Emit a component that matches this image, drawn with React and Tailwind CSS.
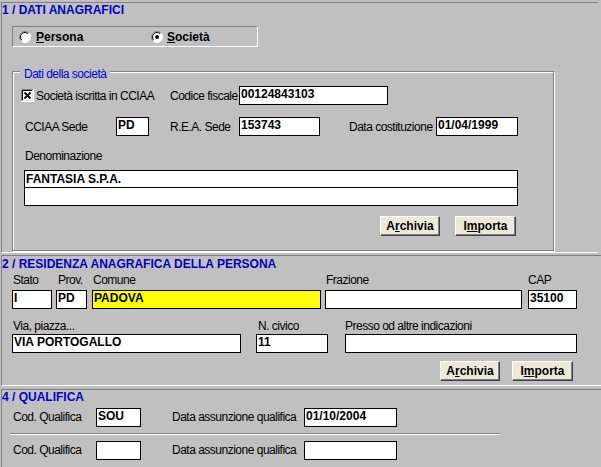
const LABEL = "text-[12px] tracking-[-0.5px] leading-[13px] text-black whitespace-nowrap";
const TITLE = "h-[14px] text-[12px] font-bold leading-[14px] text-[#0000cc] whitespace-nowrap";

function Field({ value = "", className = "", yellow = false }) {
  return (
    <div
      className={`h-[19px] shrink-0 overflow-hidden whitespace-nowrap border border-black pl-[1px] text-[12px] font-bold leading-[15px] text-black ${
        yellow ? "bg-[#ffff00]" : "bg-white"
      } ${className}`}
    >
      {value}
    </div>
  );
}

function WinButton({ a, u, b, className = "" }) {
  return (
    <button
      className={`flex h-[20px] items-center justify-center border border-t-white border-l-white border-r-[#404040] border-b-[#404040] bg-[#ece9d8] text-[12px] font-bold leading-none text-black shadow-[inset_-1px_-1px_0_#808080] ${className}`}
    >
      {a}
      <u className="underline-offset-1">{u}</u>
      {b}
    </button>
  );
}

function Radio({ checked }) {
  return (
    <svg width="12" height="12" viewBox="0 0 12 12" className="shrink-0">
      <circle cx="6" cy="6" r="5.5" fill="#fff" />
      <path d="M2.1 9.9 A5.5 5.5 0 0 1 9.9 2.1" fill="none" stroke="#808080" strokeWidth="1" />
      <path d="M2.8 9.2 A4.5 4.5 0 0 1 9.2 2.8" fill="none" stroke="#000" strokeWidth="1" />
      <path d="M9.9 2.1 A5.5 5.5 0 0 1 2.1 9.9" fill="none" stroke="#fff" strokeWidth="1" />
      {checked && <circle cx="6" cy="6" r="2" fill="#000" />}
    </svg>
  );
}

function CheckBox() {
  return (
    <svg width="13" height="13" viewBox="0 0 13 13" className="shrink-0">
      <rect x="0" y="0" width="13" height="13" fill="#fff" />
      <path d="M0.5 12 V0.5 H12" fill="none" stroke="#808080" />
      <path d="M1.5 11 V1.5 H11" fill="none" stroke="#000" />
      <path d="M0 12.5 H12.5 V0" fill="none" stroke="#fff" />
      <path d="M1 11.5 H11.5 V1" fill="none" stroke="#dfdfdf" />
      <path d="M3.5 3.5 L9.5 9.5 M9.5 3.5 L3.5 9.5" stroke="#000" strokeWidth="1.8" />
    </svg>
  );
}

export default function App() {
  return (
    <div className="h-[467px] w-[601px] overflow-hidden bg-[#c0c0c0] pl-[1px] pt-[2px] font-['Liberation_Sans',Arial,sans-serif]">
      {/* 1 / DATI ANAGRAFICI */}
      <section className="h-[251px] w-[597px] border-l border-t border-b border-l-[#808080] border-t-[#808080] border-b-white">
        <div className={TITLE}>1 / DATI ANAGRAFICI</div>

        <div className="ml-[10px] mt-[9px] flex h-[21px] w-[246px] items-center border border-t-[#808080] border-l-[#808080] border-b-white border-r-white pl-[6px]">
          <div className="flex w-[132px] items-center">
            <Radio />
            <span className="ml-[5px] text-[12px] font-bold leading-none">
              <u>P</u>ersona
            </span>
          </div>
          <Radio checked />
          <span className="ml-[4px] text-[12px] font-bold leading-none">
            <u>S</u>ocietà
          </span>
        </div>

        <div className="relative ml-[10px] mt-[24px] h-[180px] w-[542px] border border-[#808080] shadow-[inset_1px_1px_0_#fff,1px_1px_0_#fff]">
          <span className="absolute -top-[4px] left-[7px] bg-[#c0c0c0] px-[4px] text-[12px] leading-[13px] tracking-[-0.5px] text-[#0000e0]">
            Dati della società
          </span>

          <div className="mt-[14px] flex h-[19px] items-center">
            <div className="ml-[8px] flex w-[149px] items-center">
              <CheckBox />
              <span className={`${LABEL} ml-[2px] pt-[2px]`}>Società iscritta in CCIAA</span>
            </div>
            <span className={`${LABEL} w-[69px] pt-[2px]`}>Codice fiscale</span>
            <Field value="00124843103" className="w-[149px]" />
          </div>

          <div className="mt-[12px] flex h-[19px] items-center">
            <span className={`${LABEL} ml-[12px] w-[91px] pt-[2px]`}>CCIAA Sede</span>
            <Field value="PD" className="w-[33px]" />
            <span className={`${LABEL} ml-[21px] w-[69px] pt-[2px]`}>R.E.A. Sede</span>
            <Field value="153743" className="w-[81px]" />
            <span className={`${LABEL} ml-[29px] w-[87px] pt-[2px]`}>Data costituzione</span>
            <Field value="01/04/1999" className="w-[82px]" />
          </div>

          <div className={`${LABEL} ml-[12px] mt-[14px]`}>Denominazione</div>
          <div className="ml-[11px] mt-[7px] w-[494px] border border-black bg-white text-[12px] font-bold leading-[17px]">
            <div className="h-[17px] border-b border-black pl-[1px]">FANTASIA S.P.A.</div>
            <div className="h-[17px]" />
          </div>

          <div className="ml-[367px] mt-[10px] flex gap-[15px]">
            <WinButton a="A" u="r" b="chivia" className="w-[60px]" />
            <WinButton a="I" u="m" b="porta" className="w-[61px]" />
          </div>
        </div>
      </section>

      {/* 2 / RESIDENZA ANAGRAFICA DELLA PERSONA */}
      <section className="mt-[2px] h-[131px] border-l border-t border-b border-l-[#808080] border-t-[#808080] border-b-white">
        <div className={`${TITLE} mt-[1px]`}>2 / RESIDENZA ANAGRAFICA DELLA PERSONA</div>

        <div className="ml-[10px] mt-[3px] flex">
          <div className="flex w-[40px] flex-col gap-[3px]">
            <span className={`${LABEL} pl-[1px]`}>Stato</span>
            <Field value="I" className="w-[40px]" />
          </div>
          <div className="ml-[4px] flex w-[31px] flex-col gap-[3px]">
            <span className={`${LABEL} pl-[2px]`}>Prov.</span>
            <Field value="PD" className="w-[31px]" />
          </div>
          <div className="ml-[5px] flex w-[229px] flex-col gap-[3px]">
            <span className={`${LABEL} pl-[1px]`}>Comune</span>
            <Field value="PADOVA" yellow className="w-[229px]" />
          </div>
          <div className="ml-[4px] flex w-[197px] flex-col gap-[3px]">
            <span className={`${LABEL} pl-[1px]`}>Frazione</span>
            <Field className="w-[197px]" />
          </div>
          <div className="ml-[6px] flex w-[49px] flex-col gap-[3px]">
            <span className={LABEL}>CAP</span>
            <Field value="35100" className="w-[49px]" />
          </div>
        </div>

        <div className="ml-[10px] mt-[11px] flex">
          <div className="flex w-[229px] flex-col gap-[1px]">
            <span className={`${LABEL} pl-[1px]`}>Via, piazza...</span>
            <Field value="VIA PORTOGALLO" className="w-[229px]" />
          </div>
          <div className="ml-[15px] flex w-[72px] flex-col gap-[1px]">
            <span className={`${LABEL} pl-[2px]`}>N. civico</span>
            <Field value="11" className="w-[72px]" />
          </div>
          <div className="ml-[17px] flex w-[232px] flex-col gap-[1px]">
            <span className={LABEL}>Presso od altre indicazioni</span>
            <Field className="w-[232px]" />
          </div>
        </div>

        <div className="ml-[438px] mt-[8px] flex gap-[12px]">
          <WinButton a="A" u="r" b="chivia" className="w-[60px]" />
          <WinButton a="I" u="m" b="porta" className="w-[61px]" />
        </div>
      </section>

      {/* 4 / QUALIFICA */}
      <section className="mt-[3px] h-[90px] border-l border-t border-l-[#808080] border-t-[#808080]">
        <div className={TITLE}>4 / QUALIFICA</div>

        <div className="mt-[4px] flex h-[19px] items-center">
          <span className={`${LABEL} ml-[11px] w-[83px]`}>Cod. Qualifica</span>
          <Field value="SOU" className="w-[45px]" />
          <span className={`${LABEL} ml-[31px] w-[132px]`}>Data assunzione qualifica</span>
          <Field value="01/10/2004" className="w-[93px]" />
        </div>

        <div className="ml-[8px] mt-[6px] h-[2px] w-[490px] border-t border-b border-t-[#808080] border-b-white" />

        <div className="mt-[6px] flex h-[19px] items-center">
          <span className={`${LABEL} ml-[11px] w-[83px]`}>Cod. Qualifica</span>
          <Field className="w-[45px]" />
          <span className={`${LABEL} ml-[31px] w-[132px]`}>Data assunzione qualifica</span>
          <Field className="w-[93px]" />
        </div>
      </section>
    </div>
  );
}
